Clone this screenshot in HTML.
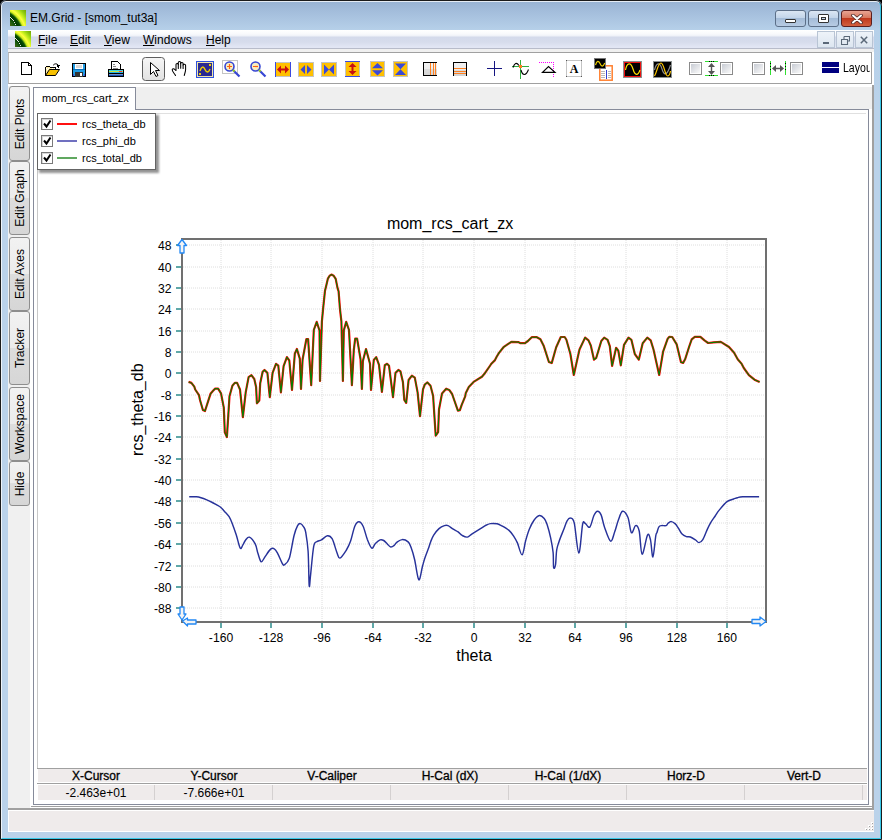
<!DOCTYPE html>
<html><head><meta charset="utf-8">
<style>
*{margin:0;padding:0;box-sizing:border-box}
html,body{width:882px;height:840px;overflow:hidden;background:#000}
body{font-family:"Liberation Sans",sans-serif;position:relative}
.a{position:absolute}
#win{left:0;top:0;width:882px;height:840px;border-radius:6px 6px 0 0;
 background:linear-gradient(180deg,#97b2d2 0px,#a4bedc 12px,#b6d0e9 30px,#bad2ea 100px,#bad2ea 100%);overflow:hidden}
#title{left:30px;top:11px;font-size:12px;color:#000;white-space:nowrap}
.cap{top:10px;height:17px;border:1px solid #5c6f88;border-radius:3px;
 background:linear-gradient(180deg,#dbe6f3 0%,#c3d5ea 45%,#a4bcd8 50%,#b7cbe3 100%)}
#menubar{left:8px;top:30px;width:866px;height:18px;background:linear-gradient(180deg,#ffffff 0px,#f8f9fc 4px,#eef1f8 6px,#d4daeb 7px,#d6dcec 12px,#e2e6f4 17px,#e2e6f4 18px)}
.mi{top:33px;font-size:12px;color:#000;white-space:nowrap}
.mi u{text-decoration:underline;text-underline-offset:1px;text-decoration-thickness:1px}
.mdib{top:31px;height:17px;width:18px;border:1px solid #b8c4d4;background:linear-gradient(180deg,#eef3f9,#dde6f0)}
#gap{left:8px;top:48px;width:866px;height:4px;background:#f0f0f0;border-top:1px solid #b8bcca}
#toolbar{left:8px;top:52px;width:864px;height:32px;border:1px solid #a0a0a0;border-left:1px solid #bcbcbc;background:#fff}
#main{left:8px;top:84px;width:866px;height:724px;background:#fff}
#tabcol{left:8px;top:86px;width:22px;height:722px;background:#f0f0f0}
.stab{left:9px;width:21px;border:1px solid #8e8e8e;border-radius:3px;background:linear-gradient(180deg,#f2f2f2 0%,#ebebeb 50%,#dddddd 50%,#d6d6d6 100%)}
.stab span{position:absolute;left:50%;top:50%;transform:translate(-50%,-50%) rotate(-90deg);font-size:12px;white-space:nowrap;color:#000}
#docouter{left:33px;top:109px;width:836px;height:696px;border:1px solid #868b9a;background:#fff}
#doctab{left:33px;top:87px;width:103px;height:23px;border:1px solid #868b9a;border-bottom:none;background:#fff}
#tabstrip{left:136px;top:87px;width:736px;height:22px;background:#efefef}
.th{top:769px;height:14px;text-align:center;font-size:12px;-webkit-text-stroke:0.3px #000;color:#000;white-space:nowrap;line-height:14px}
.td{top:786px;height:15px;text-align:center;font-size:12px;color:#000;white-space:nowrap;line-height:15px}
#status{left:8px;top:810px;width:866px;height:22px;background:#efebeb;border-top:1px solid #fff;border-left:1px solid #fff;border-bottom:1px solid #fff}
</style></head><body>
<div id="win" class="a">
 <!-- title bar icon -->
 <svg class="a" style="left:10px;top:10px" width="16" height="16" viewBox="0 0 16 16">
  <defs><radialGradient id="g1" gradientUnits="userSpaceOnUse" cx="-14" cy="26" r="40"><stop offset="0" stop-color="#3a4a18"/><stop offset=".42" stop-color="#506a12"/><stop offset=".52" stop-color="#1a5a10"/><stop offset=".6" stop-color="#003a00"/><stop offset=".66" stop-color="#0a5008"/><stop offset=".71" stop-color="#d0f020"/><stop offset=".76" stop-color="#ffff40"/><stop offset=".82" stop-color="#c8f020"/><stop offset=".9" stop-color="#90cc10"/><stop offset="1" stop-color="#70a008"/></radialGradient></defs>
  <rect width="16" height="16" fill="url(#g1)"/><path d="M0 7h1v1H0zM1 8h1v1H1zM2 9h1v1H2zM3 10h1v1H3zM4 12h1v1H4zM5 14h1v1H5z" fill="#e8e8e8"/></svg>
 <div id="title" class="a">EM.Grid - [smom_tut3a]</div>
 <div class="a cap" style="left:775px;width:31px"><div class="a" style="left:9px;top:8px;width:11px;height:4px;background:#fff;border:1px solid #333;border-radius:1px"></div></div>
 <div class="a cap" style="left:808px;width:31px"><div class="a" style="left:9px;top:3px;width:11px;height:9px;background:#fff;border:1px solid #333;border-radius:1px"><div class="a" style="left:2px;top:2px;width:5px;height:3px;border:1px solid #333;background:#c6d6ea"></div></div></div>
 <div class="a cap" style="left:841px;width:31px;border-color:#5a1f1f;background:linear-gradient(180deg,#e8a493 0%,#d7785f 45%,#c0391d 50%,#d2603f 100%)">
  <svg class="a" style="left:9px;top:3px" width="12" height="10" viewBox="0 0 12 10"><path d="M2 1.5 L10 8.5 M10 1.5 L2 8.5" stroke="#4a2a2a" stroke-width="3.6" stroke-linecap="round"/><path d="M2 1.5 L10 8.5 M10 1.5 L2 8.5" stroke="#fff" stroke-width="2" stroke-linecap="round"/></svg>
 </div>

 <div id="menubar" class="a"></div>
 <svg class="a" style="left:15px;top:31px" width="16" height="16" viewBox="0 0 16 16"><rect width="16" height="16" fill="url(#g1)"/><path d="M0 7h1v1H0zM1 8h1v1H1zM2 9h1v1H2zM3 10h1v1H3zM4 12h1v1H4zM5 14h1v1H5z" fill="#e8e8e8"/></svg>
 <div class="a mi" style="left:38px"><u>F</u>ile</div>
 <div class="a mi" style="left:70px"><u>E</u>dit</div>
 <div class="a mi" style="left:104px"><u>V</u>iew</div>
 <div class="a mi" style="left:143px"><u>W</u>indows</div>
 <div class="a mi" style="left:206px"><u>H</u>elp</div>
 <div class="a mdib" style="left:817px"><div class="a" style="left:5px;top:10px;width:6px;height:2px;background:#5a6878"></div></div>
 <div class="a mdib" style="left:836px"><svg class="a" style="left:4px;top:4px" width="9" height="9" viewBox="0 0 9 9"><path d="M3 .5h5.5v4.5h-2M.5 3.5h6v5h-6z M3 .5v3" fill="none" stroke="#5a6878" stroke-width="1.1"/></svg></div>
 <div class="a mdib" style="left:855px"><svg class="a" style="left:4px;top:4px" width="8" height="8" viewBox="0 0 8 8"><path d="M.8 .8L7.2 7.2M7.2 .8L.8 7.2" stroke="#5a6878" stroke-width="1.5"/></svg></div>

 <div id="gap" class="a"></div>
 <div class="a" style="left:8px;top:52px;width:866px;height:33px;background:#fff"></div>
 <div id="toolbar" class="a"></div>
 <!--TOOLBAR-->
<svg class="a" style="left:0;top:52px" width="882" height="32" viewBox="0 52 882 32" shape-rendering="crispEdges">
<!-- new doc -->
<path d="M21.5 62.5H28.5L31.5 65.5V74.5H21.5Z" fill="#fff" stroke="#000" stroke-width="1"/>
<path d="M28 63h1v2h2v1h-3z" fill="#000"/>
<!-- open folder -->
<path d="M45.5 75.5V67.5L46.5 66.5H49.5L50.5 67.5H55.5V69.5" fill="#fdeaa0" stroke="#000"/>
<path d="M46 68h1v1h-1zM48 68h1v1h-1zM47 69h1v1h-1zM52 68h1v1h-1zM54 68h1v1h-1z" fill="#fff"/>
<path d="M45.5 75.5L49.5 69.5H59.5L55.5 75.5Z" fill="#f6c000" stroke="#000" stroke-linejoin="round" shape-rendering="auto"/>
<path d="M53.2 65.2C54.5 63.5 56.8 63.3 58.2 65" fill="none" stroke="#000" stroke-width="1" shape-rendering="auto"/>
<path d="M57 64.5h3v1h-1v2h-1v-1h-1z" fill="#000"/>
<!-- save -->
<rect x="72.5" y="63.5" width="13" height="13" fill="#1e9be4" stroke="#000"/>
<rect x="75" y="64" width="8" height="5" fill="#fff"/>
<rect x="76" y="65" width="6" height="3" fill="#d8d8d8"/>
<rect x="73" y="69" width="12" height="1" fill="#0c6fb8"/>
<rect x="75" y="72" width="8" height="5" fill="#333"/>
<rect x="80" y="73" width="2" height="3" fill="#fff"/>
<rect x="73" y="74" width="1" height="2" fill="#4a4ad0"/>
<rect x="84" y="74" width="1" height="2" fill="#4a4ad0"/>
<!-- print -->
<path d="M111.5 61.5H117.5L120.5 64.5V69.5H111.5Z" fill="#fff" stroke="#000"/>
<path d="M113 64h2v1h-2zM113 66h3v1h-3zM113 68h5v1h-5z" fill="#888"/>
<rect x="108.5" y="69.5" width="15" height="7" rx="1" fill="#1a50b0" stroke="#000"/>
<rect x="109" y="70" width="14" height="1" fill="#3bd0e0"/>
<rect x="109" y="71" width="14" height="1" fill="#c8e040"/>
<rect x="109" y="72" width="14" height="1" fill="#20b0e8"/>
<rect x="109" y="73" width="14" height="1" fill="#000"/>
<rect x="109" y="74" width="14" height="1" fill="#6a90d0"/>
<rect x="119" y="71" width="3" height="1" fill="#ff3030"/>
<!-- pressed select button -->
<rect x="142.5" y="57.5" width="22" height="23" rx="3" fill="url(#pbg)" stroke="#5e5e5e" shape-rendering="auto"/>
<defs><linearGradient id="pbg" x1="0" y1="0" x2="0" y2="1"><stop offset="0" stop-color="#f6f6f6"/><stop offset="1" stop-color="#e2e2e2"/></linearGradient></defs>
<path d="M150.5 62.5V74.5L153.5 71.5L156 76.5L158 75.5L155.5 70.5H159.5Z" fill="#fff" stroke="#000" shape-rendering="auto"/>
<!-- hand -->
<g shape-rendering="auto" stroke="#000" stroke-width="1.05" stroke-linejoin="round" stroke-linecap="round">
<path d="M175.5 75.5C174.5 73.5 172.2 71.5 172.2 69.8C172.2 68.6 173.8 68.4 175 69.6L176 70.5V64.6C176 63.2 178.3 63.2 178.3 64.6V62.6C178.3 61.2 180.7 61.2 180.7 62.6V63.4C180.7 62.2 183.1 62.2 183.1 63.6V65C183.1 64 185.6 64 185.6 65.4V69.5C185.6 72 184.6 73.5 184.3 75.5" fill="#fff"/>
<path d="M178.3 64.6V68.5M180.7 63.4V68.3M183.1 65V68.5" fill="none"/>
</g>
<!-- blue box sine -->
<rect x="196.5" y="61.5" width="17" height="16" fill="#2a2a92" stroke="#2e52e0"/>
<rect x="197.5" y="62.5" width="15" height="14" fill="none" stroke="#f0e6a8"/>
<path d="M200 71C201.5 66 203.5 66 205 69.5C206.5 73 208.5 73 210 69" fill="none" stroke="#f0d000" stroke-width="1.4" shape-rendering="auto"/>
<rect x="209" y="64" width="2" height="2" fill="#f0d000"/>
<rect x="199" y="73" width="2" height="2" fill="#f0d000"/>
<!-- zoom in -->
<rect x="222.5" y="60.5" width="15" height="13" fill="#fff" stroke="#c4c4c4"/>
<g shape-rendering="auto">
<circle cx="229.5" cy="66.5" r="4.5" fill="#f8efc0" stroke="#3646d4" stroke-width="1.6"/>
<path d="M233 70L239.5 76.5" stroke="#3646d4" stroke-width="2.2"/>
<path d="M233 70L234.5 71.5" stroke="#9ad020" stroke-width="2"/>
<path d="M227 66.5H232M229.5 64V69" stroke="#ff6010" stroke-width="1.2"/>
<circle cx="255.5" cy="66.5" r="4.5" fill="#f8efc0" stroke="#3646d4" stroke-width="1.6"/>
<path d="M259 70L265.5 76.5" stroke="#3646d4" stroke-width="2.2"/>
<path d="M259 70L260.5 71.5" stroke="#9ad020" stroke-width="2"/>
<path d="M253 66.5H258" stroke="#ff6010" stroke-width="1.2"/>
</g>
<!-- icon1 h expand red -->
<rect x="275" y="62" width="16" height="15" fill="#ffc000"/>
<path d="M275 62h16v1h-16zM275 76h16v1h-16z" fill="#c4c4c4"/>
<path d="M275 62h1v15h-1zM290 62h1v15h-1z" fill="#3a4ae0"/>
<path d="M277 69.5L281 65.5V68.5H285V65.5L289 69.5L285 73.5V70.5H281V73.5Z" fill="#c81010" shape-rendering="auto"/>
<!-- icon2 -->
<rect x="298.5" y="62.5" width="15" height="14" fill="#ffc000" stroke="#c4c4c4"/>
<path d="M300.5 69.5L305 65V74ZM311.5 69.5L307 65V74Z" fill="#3a4ad8" shape-rendering="auto"/>
<!-- icon3 -->
<rect x="321.5" y="62.5" width="15" height="14" fill="#ffc000" stroke="#c4c4c4"/>
<path d="M324 64.5L329 69.5L324 74.5ZM334 64.5L329 69.5L334 74.5Z" fill="#3a4ad8" shape-rendering="auto"/>
<!-- icon4 v expand red -->
<rect x="345" y="61" width="15" height="16" fill="#ffc000"/>
<path d="M345 61h1v16h-1zM359 61h1v16h-1z" fill="#c4c4c4"/>
<path d="M345 61h15v1h-15zM345 76h15v1h-15z" fill="#3a4ae0"/>
<path d="M352.5 63L356.5 67H353.5V71H356.5L352.5 75L348.5 71H351.5V67H348.5Z" fill="#c81010" shape-rendering="auto"/>
<!-- icon5 -->
<rect x="370.5" y="61.5" width="14" height="15" fill="#ffc000" stroke="#c4c4c4"/>
<path d="M377.5 63L383 68.3H372ZM377.5 75.5L383 70.2H372Z" fill="#3a4ad8" shape-rendering="auto"/>
<!-- icon6 -->
<rect x="393.5" y="61.5" width="14" height="15" fill="#ffc000" stroke="#c4c4c4"/>
<path d="M395 63.5H406L400.5 69.3ZM395 75H406L400.5 69.3Z" fill="#3a4ad8" shape-rendering="auto"/>
<!-- vgrid -->
<defs><linearGradient id="gg" x1="0" y1="0" x2="0" y2="1"><stop offset="0" stop-color="#f2f2f2"/><stop offset=".5" stop-color="#ececec"/><stop offset=".5" stop-color="#dcdcdc"/><stop offset="1" stop-color="#d4d4d4"/></linearGradient></defs>
<rect x="424" y="63" width="13" height="12" fill="url(#gg)"/>
<path d="M423 62h14v1h-14zM423 75h14v1h-14zM423 62h1v14h-1z" fill="#000"/>
<path d="M430 63h1v12h-1zM433 63h1v12h-1zM435 63h1v12h-1z" fill="#ff8020"/>
<!-- hgrid -->
<rect x="454" y="63" width="12" height="13" fill="url(#gg)"/>
<path d="M453 62h14v1h-14zM453 62h1v14h-1zM466 62h1v14h-1z" fill="#000"/>
<path d="M454 68h12v1h-12zM454 71h12v1h-12zM454 73h12v1h-12z" fill="#ff8020"/>
<!-- crosshair -->
<path d="M494 61h1.2v15h-1.2zM487 67.8h15v1.2h-15z" fill="#141480"/>
<!-- tracker -->
<path d="M520 60h1v19h-1zM512 66h17v1h-17z" fill="#30b040"/>
<path d="M513 67.5C514.5 63 516.5 62 519 65.5M521 70C522.5 76 526 76 528.5 69.5" fill="none" stroke="#000" stroke-width="1.1" shape-rendering="auto"/>
<rect x="519" y="65" width="3" height="3" fill="#ff8020"/>
<!-- triangle w/ magenta -->
<path d="M539 62h1v1h-1zM541 62h1v1h-1zM543 62h1v1h-1zM545 62h1v1h-1zM547 62h1v1h-1zM549 62h1v1h-1zM551 62h1v1h-1zM553 62h1v1h-1zM553 64h1v1h-1zM553 66h1v1h-1zM553 68h1v1h-1zM553 70h1v1h-1zM553 72h1v1h-1zM553 74h1v1h-1zM553 76h1v1h-1z" fill="#ff00ff"/>
<path d="M542.5 72.3H555L548.5 66.5Z" fill="none" stroke="#000" stroke-width="1.2" shape-rendering="auto"/>
<!-- text A -->
<rect x="566.5" y="60.5" width="15" height="16" fill="#fff" stroke="#c4c4c4"/><path d="M566 60h1v1h-1zM581 60h1v1h-1zM566 76h1v1h-1zM581 76h1v1h-1z" fill="#555"/>
<text x="574" y="73" text-anchor="middle" font-family="Liberation Serif" font-weight="bold" font-size="12" fill="#000" shape-rendering="auto">A</text>
<!-- graph+doc -->
<rect x="599" y="65" width="14" height="16" fill="#fff"/>
<rect x="599.8" y="65.8" width="12.4" height="14.4" fill="none" stroke="#ff8030" stroke-width="1.5" shape-rendering="auto"/>
<path d="M601 71h4v1h-4zM601 73h4v1h-4zM601 75h4v1h-4zM601 77h4v1h-4zM608 71h3v1h-3zM608 73h3v1h-3zM608 75h3v1h-3zM608 77h3v1h-3z" fill="#b8b8b8"/>
<rect x="606" y="70" width="1" height="9" fill="#3040d0"/>
<rect x="594.5" y="58.5" width="11" height="10" fill="#000" stroke="#777"/>
<path d="M595.5 65C596.8 60.5 598.5 60.5 600 63.5C601.5 67 603 67 604.8 63" fill="none" stroke="#f0d000" stroke-width="1.2" shape-rendering="auto"/>
<!-- red box -->
<rect x="623.5" y="61.5" width="18" height="16" fill="#000" stroke="#8a9090"/>
<rect x="624.5" y="62.5" width="16" height="14" fill="none" stroke="#ee1010"/>
<path d="M625.5 70C627 62 631 62 633 69C635 76 638 76 640 70" fill="none" stroke="#ffe000" stroke-width="1.2" shape-rendering="auto"/>
<!-- gray/yellow box -->
<rect x="653.5" y="61.5" width="18" height="16" fill="#000" stroke="#8a9090"/>
<path d="M654.5 70C656.5 62 660 62 662 69C664 76 667 76 670.5 65" fill="none" stroke="#909090" stroke-width="1.1" shape-rendering="auto"/>
<path d="M654.5 76C657 72 658 63 661 63C664 63 665 76 667.5 76C669 76 670 74 670.5 71" fill="none" stroke="#ffc800" stroke-width="1.2" shape-rendering="auto"/>
<!-- checkboxes -->
<defs><linearGradient id="cb" x1="0" y1="0" x2="1" y2="1"><stop offset="0" stop-color="#c8ccd4"/><stop offset="1" stop-color="#fafafa"/></linearGradient></defs>
<g>
<rect x="689.5" y="62.5" width="12" height="12" fill="#fff" stroke="#8a8a8a"/><rect x="691" y="64" width="9" height="9" fill="url(#cb)"/>
<rect x="720.5" y="62.5" width="12" height="12" fill="#fff" stroke="#8a8a8a"/><rect x="722" y="64" width="9" height="9" fill="url(#cb)"/>
<rect x="752.5" y="62.5" width="12" height="12" fill="#fff" stroke="#8a8a8a"/><rect x="754" y="64" width="9" height="9" fill="url(#cb)"/>
<rect x="790.5" y="62.5" width="12" height="12" fill="#fff" stroke="#8a8a8a"/><rect x="792" y="64" width="9" height="9" fill="url(#cb)"/>
</g>
<!-- v arrows -->
<path d="M705 61h13v1h-13zM705 75h13v1h-13z" fill="#30e030"/>
<path d="M711 61h1v1h-1zM709 61h1v1h-1zM713 61h1v1h-1zM711 75h1v1h-1zM709 75h1v1h-1zM713 75h1v1h-1z" fill="#000"/>
<path d="M711.5 63L715 67H712.2V71H715L711.5 75L708 71H710.8V67H708Z" fill="#555" shape-rendering="auto"/>
<!-- h arrows -->
<path d="M770 61h1v14h-1zM785 61h1v14h-1z" fill="#30e030"/>
<path d="M770 63h1v1h-1zM770 66h1v1h-1zM770 69h1v1h-1zM785 63h1v1h-1zM785 66h1v1h-1zM785 69h1v1h-1z" fill="#000"/>
<path d="M772 68.5L776 65V67.8H780V65L784 68.5L780 72V69.2H776V72Z" fill="#555" shape-rendering="auto"/>
<!-- layout -->
<rect x="822" y="62" width="17" height="5" fill="#000080"/>
<rect x="822" y="68" width="17" height="5" fill="#000080"/>
</svg>

<!--/TOOLBAR-->
 <div class="a" style="left:843px;top:61px;width:27px;height:16px;overflow:hidden;font-size:12px;white-space:nowrap;color:#000"><span style="display:inline-block;transform:scale(.88,1.05);transform-origin:0 50%">Layout</span></div>

 <div id="main" class="a"></div>
 <div id="tabcol" class="a"></div>
 <div class="a" style="left:872px;top:85px;width:2px;height:725px;background:#a0a0a0"></div>
 <div class="a" style="left:31px;top:806px;width:843px;height:1px;background:#a0a0a0"></div>
 <div class="a" style="left:8px;top:808px;width:866px;height:2px;background:#a0a0a0"></div>
 <div class="a stab" style="top:86px;height:75px"><span>Edit Plots</span></div>
 <div class="a stab" style="top:161px;height:74px"><span>Edit Graph</span></div>
 <div class="a stab" style="top:237px;height:74px"><span>Edit Axes</span></div>
 <div class="a stab" style="top:311px;height:74px"><span>Tracker</span></div>
 <div class="a stab" style="top:387px;height:74px"><span>Workspace</span></div>
 <div class="a stab" style="top:461px;height:45px"><span>Hide</span></div>

 <div id="tabstrip" class="a"></div>
 <div id="docouter" class="a"></div>
 <div id="doctab" class="a"><div class="a" style="left:8px;top:4px;font-size:11px;color:#000;white-space:nowrap">mom_rcs_cart_zx</div></div>


 <!-- inner plot border -->
 <div class="a" style="left:37px;top:113px;width:829px;height:655px;border-left:1px solid #c8c8c8;border-top:1px solid #e0e0e0"></div>
 <!-- legend -->
 <div class="a" style="left:39px;top:115px;width:120px;height:58px;background:#707070;opacity:.75;filter:blur(1px)"></div>
 <div class="a" style="left:37px;top:113px;width:119px;height:57px;background:#fff;border:1px solid #646464"></div>
 <svg class="a" style="left:37px;top:113px" width="119" height="57" viewBox="37 113 119 57">
  <g shape-rendering="crispEdges">
  <rect x="41.5" y="118.5" width="11" height="11" fill="#fff" stroke="#7a7a7a"/>
  <rect x="41.5" y="135.5" width="11" height="11" fill="#fff" stroke="#7a7a7a"/>
  <rect x="41.5" y="152.5" width="11" height="11" fill="#fff" stroke="#7a7a7a"/>
  <rect x="42" y="119" width="1" height="10" fill="#d8d8d8"/><rect x="42" y="119" width="10" height="1" fill="#d8d8d8"/>
  <rect x="42" y="136" width="1" height="10" fill="#d8d8d8"/><rect x="42" y="136" width="10" height="1" fill="#d8d8d8"/>
  <rect x="42" y="153" width="1" height="10" fill="#d8d8d8"/><rect x="42" y="153" width="10" height="1" fill="#d8d8d8"/>
  <rect x="57" y="123" width="20" height="2" fill="#ff1010"/>
  <rect x="57" y="140" width="20" height="2" fill="#7070c0"/>
  <rect x="57" y="157" width="20" height="2" fill="#60a860"/>
  </g>
  <path d="M44 123.5L46.5 126.5L50.5 120.5M44 140.5L46.5 143.5L50.5 137.5M44 157.5L46.5 160.5L50.5 154.5" fill="none" stroke="#000" stroke-width="2"/>
  <g font-family="Liberation Sans" font-size="11" fill="#000">
  <text x="82" y="128">rcs_theta_db</text>
  <text x="82" y="145">rcs_phi_db</text>
  <text x="82" y="162">rcs_total_db</text>
  </g>
 </svg>
 <div class="a" style="left:37px;top:768px;width:830px;height:1px;background:#a0a0a0"></div>
 <div class="a" style="left:38px;top:769px;width:829px;height:13px;background:#efebeb"></div>
 <div class="a" style="left:37px;top:783px;width:830px;height:1px;background:#a0a0a0"></div>
 <div class="a" style="left:38px;top:785px;width:829px;height:15px;background:#efebeb"></div>
 <div class="a th" style="left:37px;width:118px">X-Cursor</div>
 <div class="a td" style="left:37px;width:118px">-2.463e+01</div>
 <div class="a th" style="left:155px;width:118px">Y-Cursor</div>
 <div class="a td" style="left:155px;width:118px">-7.666e+01</div>
 <div class="a" style="left:154px;top:785px;width:1px;height:15px;background:#d4d0d0"></div>
 <div class="a th" style="left:273px;width:118px">V-Caliper</div>
 <div class="a" style="left:272px;top:785px;width:1px;height:15px;background:#d4d0d0"></div>
 <div class="a th" style="left:391px;width:118px">H-Cal (dX)</div>
 <div class="a" style="left:390px;top:785px;width:1px;height:15px;background:#d4d0d0"></div>
 <div class="a th" style="left:509px;width:118px">H-Cal (1/dX)</div>
 <div class="a" style="left:508px;top:785px;width:1px;height:15px;background:#d4d0d0"></div>
 <div class="a th" style="left:627px;width:118px">Horz-D</div>
 <div class="a" style="left:626px;top:785px;width:1px;height:15px;background:#d4d0d0"></div>
 <div class="a th" style="left:745px;width:118px">Vert-D</div>
 <div class="a" style="left:744px;top:785px;width:1px;height:15px;background:#d4d0d0"></div>
 <div class="a" style="left:862px;top:785px;width:1px;height:15px;background:#d4d0d0"></div>
 <!--PLOT-->
<svg class="a" style="left:0;top:0" width="882" height="840" viewBox="0 0 882 840">
<path d="M221 240V621 M271 240V621 M322 240V621 M373 240V621 M423 240V621 M474 240V621 M525 240V621 M575 240V621 M626 240V621 M677 240V621 M727 240V621 M183 245H765 M183 267H765 M183 288H765 M183 309H765 M183 331H765 M183 352H765 M183 373H765 M183 395H765 M183 416H765 M183 437H765 M183 459H765 M183 480H765 M183 501H765 M183 523H765 M183 544H765 M183 566H765 M183 587H765 M183 608H765" stroke="#dedede" stroke-width="1" stroke-dasharray="1 1" fill="none"/>
<path d="M189.2 496.8 C190.4 496.8 194.4 496.7 196.4 496.8 C198.4 496.9 199.4 497.2 201.0 497.7 C202.6 498.2 204.5 498.9 206.2 499.6 C207.9 500.3 209.7 501.1 211.4 502.0 C213.2 502.9 215.1 504.0 216.7 504.9 C218.3 505.8 219.6 506.4 220.9 507.5 C222.2 508.6 223.1 509.9 224.5 511.4 C225.9 512.9 227.8 514.6 229.1 516.7 C230.4 518.8 231.2 520.9 232.4 523.9 C233.6 526.9 235.0 531.0 236.3 535.0 C237.6 539.0 239.1 546.5 240.2 548.1 C241.3 549.7 242.0 546.1 242.9 544.8 C243.8 543.5 244.4 541.5 245.5 540.2 C246.6 538.9 247.8 536.5 249.4 537.2 C251.0 537.9 253.9 541.5 255.3 544.2 C256.7 546.9 256.9 550.4 257.9 553.3 C258.9 556.2 260.0 561.2 261.2 561.8 C262.4 562.3 263.6 558.7 265.1 556.6 C266.6 554.5 268.9 550.7 270.4 549.4 C271.9 548.1 273.1 548.1 274.3 548.8 C275.5 549.4 276.3 550.9 277.6 553.3 C278.9 555.7 281.0 561.2 282.1 563.1 C283.2 565.0 283.1 565.7 284.3 564.9 C285.5 564.1 287.7 563.2 289.3 558.3 C290.9 553.4 292.6 541.2 294.0 535.7 C295.4 530.2 296.5 527.6 297.6 525.6 C298.7 523.6 299.4 523.4 300.4 523.6 C301.4 523.8 302.7 525.4 303.6 526.8 C304.5 528.2 304.9 528.0 305.7 532.1 C306.4 536.2 307.5 542.3 308.1 551.2 C308.7 560.1 308.8 581.9 309.2 585.7 C309.6 589.5 309.9 580.3 310.7 573.8 C311.4 567.2 312.7 551.8 313.7 546.4 C314.7 541.0 315.4 542.8 316.7 541.7 C318.0 540.6 319.6 540.9 321.4 539.9 C323.2 538.9 325.6 535.9 327.4 535.7 C329.2 535.5 330.5 535.9 332.1 538.7 C333.7 541.5 335.6 549.2 336.9 552.4 C338.2 555.6 338.3 558.5 339.9 558.1 C341.5 557.7 344.6 552.8 346.4 550.0 C348.2 547.2 349.2 545.1 350.6 541.1 C352.0 537.1 353.4 529.4 354.8 526.2 C356.2 523.0 357.5 521.8 358.9 521.8 C360.3 521.8 361.7 523.3 363.1 526.2 C364.5 529.1 365.9 535.6 367.3 539.3 C368.8 543.0 370.5 547.5 371.8 548.2 C373.1 548.9 374.0 544.9 375.4 543.5 C376.8 542.1 378.7 540.4 380.1 539.9 C381.5 539.4 382.5 539.8 383.7 540.5 C384.9 541.2 386.1 542.9 387.3 544.0 C388.5 545.1 389.6 546.8 390.8 547.0 C392.0 547.2 393.4 546.0 394.4 545.2 C395.4 544.4 395.5 543.2 396.8 542.3 C398.1 541.4 400.2 539.7 402.1 539.6 C404.0 539.5 406.6 540.6 408.1 541.9 C409.6 543.2 410.0 544.7 411.1 547.6 C412.2 550.5 413.3 554.1 414.6 559.5 C415.9 564.9 417.5 578.6 418.8 579.8 C420.1 581.0 421.4 570.3 422.4 566.7 C423.4 563.1 423.8 561.3 424.8 558.3 C425.8 555.3 427.3 551.6 428.3 548.8 C429.3 546.0 429.8 544.0 430.7 541.7 C431.6 539.4 432.3 537.3 433.7 535.1 C435.1 532.9 437.2 530.2 439.0 528.6 C440.8 527.0 442.9 526.1 444.4 525.6 C445.9 525.1 446.5 525.0 448.0 525.6 C449.5 526.2 451.6 528.2 453.3 529.2 C455.0 530.2 456.6 530.9 458.1 531.9 C459.6 532.9 460.8 534.6 462.3 535.5 C463.9 536.4 465.8 537.4 467.4 537.1 C469.0 536.8 469.9 535.3 472.1 533.9 C474.3 532.5 478.1 530.1 480.5 528.6 C482.9 527.1 484.7 525.8 486.4 525.0 C488.1 524.2 488.8 523.8 490.6 523.6 C492.4 523.4 495.3 523.5 497.1 523.8 C498.9 524.1 499.3 524.5 501.3 525.6 C503.3 526.7 506.9 528.6 509.0 530.4 C511.1 532.2 512.4 534.2 513.8 536.3 C515.2 538.4 516.0 539.8 517.4 542.9 C518.8 546.0 520.7 555.2 522.1 554.8 C523.5 554.4 524.5 544.8 525.7 540.5 C526.9 536.2 527.9 532.6 529.3 529.2 C530.7 525.8 532.3 522.5 534.0 520.2 C535.7 517.9 537.7 515.8 539.4 515.5 C541.1 515.2 542.9 517.0 544.2 518.5 C545.5 520.0 546.0 521.1 547.1 524.4 C548.2 527.7 549.7 533.4 550.7 538.1 C551.7 542.8 552.6 547.5 553.1 552.4 C553.6 557.3 553.2 565.2 553.6 567.3 C554.0 569.4 555.0 567.8 555.5 564.9 C556.0 562.0 556.1 553.9 556.7 550.0 C557.3 546.1 557.9 545.1 559.0 541.7 C560.1 538.3 562.2 533.3 563.6 529.8 C565.0 526.3 565.9 522.8 567.1 520.8 C568.3 518.8 569.5 517.7 570.7 518.1 C571.9 518.5 572.9 517.4 574.3 523.2 C575.6 529.0 577.4 552.8 578.8 553.0 C580.2 553.2 581.6 529.4 582.6 524.4 C583.6 519.4 583.8 522.8 585.0 523.2 C586.2 523.7 588.3 528.4 589.8 527.1 C591.3 525.8 592.6 518.1 593.9 515.5 C595.2 512.9 596.3 511.4 597.5 511.3 C598.7 511.2 599.9 512.2 601.1 514.9 C602.3 517.6 603.0 523.0 604.6 527.4 C606.2 531.8 608.9 540.4 610.6 541.1 C612.3 541.8 613.5 535.0 614.8 531.5 C616.1 528.0 617.0 523.6 618.3 520.2 C619.6 516.8 620.9 511.8 622.5 511.3 C624.1 510.8 626.4 513.7 627.9 517.3 C629.4 520.9 630.1 531.3 631.4 532.7 C632.7 534.1 634.3 525.9 635.6 525.6 C636.9 525.3 638.1 526.2 639.2 531.0 C640.3 535.8 640.7 553.5 642.1 554.2 C643.5 554.9 646.1 537.5 647.5 535.1 C648.9 532.7 649.6 536.3 650.5 539.9 C651.4 543.5 652.0 557.6 652.9 556.9 C653.8 556.2 655.1 539.8 655.8 535.7 C656.5 531.6 656.5 533.9 657.0 532.4 C657.5 530.9 658.1 528.0 658.9 526.9 C659.6 525.8 660.3 525.8 661.5 525.6 C662.7 525.4 665.0 526.0 666.1 525.6 C667.2 525.2 667.2 523.9 668.1 523.2 C669.0 522.5 670.2 521.5 671.4 521.6 C672.6 521.7 674.1 522.8 675.3 523.9 C676.5 525.0 677.5 526.9 678.6 528.5 C679.7 530.1 680.5 532.4 681.8 533.7 C683.1 535.1 685.0 536.1 686.4 536.6 C687.8 537.1 688.9 536.4 690.4 537.0 C691.9 537.6 694.2 539.1 695.6 540.0 C697.0 540.9 697.7 542.7 698.9 542.6 C700.1 542.5 701.4 541.9 702.8 539.6 C704.2 537.4 706.1 531.9 707.4 529.1 C708.7 526.3 709.4 524.8 710.7 522.6 C712.0 520.4 713.8 518.1 715.2 516.0 C716.6 513.9 717.2 512.5 719.2 510.1 C721.2 507.7 724.6 503.5 727.0 501.6 C729.4 499.8 731.9 499.6 733.6 499.0 C735.4 498.4 736.0 498.1 737.5 497.7 C739.0 497.3 739.1 496.9 742.7 496.8 C746.3 496.7 756.4 496.8 759.1 496.8" stroke="#27329a" stroke-width="1.45" fill="none" stroke-linejoin="round"/>
<path d="M188.6 381.9 L191.4 382.9 L194.3 386.7 L195.2 389.5 L199.0 395.2 L200.0 400.0 L202.9 410.0 L205.0 411.0 L207.6 402.9 L210.5 393.8 L213.3 390.5 L215.2 388.6 L218.1 388.6 L221.0 393.3 L223.8 407.6 L224.8 432.4 L226.9 437.1 L229.5 396.2 L232.4 385.7 L234.8 382.9 L237.1 382.9 L240.0 389.5 L242.9 417.1 L245.7 392.4 L248.6 377.1 L251.4 375.2 L254.3 379.0 L256.1 387.1 L256.9 403.3 L259.3 400.5 L260.2 383.3 L262.6 371.9 L264.5 370.0 L267.4 372.9 L269.8 397.1 L272.6 372.9 L276.0 363.8 L278.3 365.7 L280.9 392.4 L283.6 366.2 L286.9 357.1 L289.3 360.5 L292.0 390.0 L294.8 353.8 L296.9 349.0 L299.8 358.6 L301.0 389.0 L302.6 359.5 L306.4 339.0 L308.1 339.0 L311.2 385.2 L313.8 330.0 L316.7 321.9 L319.5 330.5 L320.0 381.0 L321.9 321.4 L323.2 307.9 L325.0 290.7 L326.4 285.0 L327.9 278.6 L329.6 275.7 L331.8 274.6 L333.6 275.7 L335.7 278.9 L337.5 287.9 L338.6 291.4 L340.0 309.3 L341.4 321.4 L342.9 381.0 L343.8 330.5 L346.2 321.9 L349.0 330.0 L351.9 385.2 L353.8 350.0 L355.2 338.6 L357.1 338.6 L360.5 359.0 L361.9 389.0 L362.9 361.0 L366.0 349.0 L370.0 363.8 L371.0 390.0 L373.8 360.0 L376.2 357.1 L379.0 364.8 L381.9 391.9 L384.8 365.2 L387.1 363.8 L389.0 365.7 L393.0 397.1 L395.5 372.9 L398.4 370.0 L400.5 371.4 L402.9 381.9 L404.3 400.0 L406.2 402.9 L408.6 380.0 L411.9 375.7 L414.8 377.6 L417.6 392.4 L420.0 416.2 L423.0 389.3 L424.8 384.5 L427.4 382.4 L430.5 385.7 L433.1 395.8 L435.7 435.7 L438.1 432.1 L439.0 409.5 L442.0 393.5 L446.2 388.7 L449.2 389.9 L452.1 394.0 L457.9 410.7 L459.9 410.1 L461.7 404.8 L465.2 396.4 L465.8 392.9 L468.8 386.9 L473.6 381.9 L481.9 376.8 L484.9 373.2 L490.2 365.5 L491.4 363.7 L495.0 360.1 L496.8 356.5 L499.0 352.9 L503.5 347.2 L507.5 344.4 L511.4 341.8 L518.2 342.1 L520.5 343.2 L525.0 343.2 L527.9 341.0 L531.8 337.2 L536.4 337.0 L540.4 339.3 L543.8 346.1 L548.9 362.0 L551.7 363.1 L556.2 347.2 L560.8 337.0 L564.7 337.0 L566.4 339.8 L570.4 354.0 L573.8 375.0 L579.5 349.5 L585.1 337.6 L588.5 340.4 L590.8 345.5 L594.0 359.7 L596.2 358.0 L601.3 341.0 L604.2 337.6 L607.6 339.8 L609.8 346.1 L612.1 365.9 L616.1 347.8 L618.3 350.6 L620.8 365.4 L624.0 344.9 L628.5 337.6 L631.4 339.8 L634.8 354.0 L638.8 359.7 L642.7 343.2 L647.3 337.6 L650.7 340.4 L653.5 349.5 L659.2 375.0 L663.1 351.7 L667.7 338.7 L669.4 336.8 L672.2 337.0 L676.7 344.4 L681.0 362.3 L683.1 362.9 L685.1 359.3 L689.2 346.5 L691.7 339.4 L694.8 336.8 L700.4 336.8 L704.5 340.4 L708.1 343.0 L713.7 342.4 L720.8 341.9 L729.0 347.0 L734.1 352.7 L737.7 359.3 L741.7 363.9 L743.8 368.0 L748.9 375.1 L754.5 379.7 L759.6 382.0" stroke="#ff0000" stroke-width="2.2" fill="none" stroke-linejoin="round"/>
<path d="M188.6 381.9 L191.4 382.9 L194.3 386.7 L195.2 389.5 L199.0 395.2 L200.0 400.0 L202.9 410.0 L205.0 411.0 L207.6 402.9 L210.5 393.8 L213.3 390.5 L215.2 388.6 L218.1 388.6 L221.0 393.3 L223.8 407.6 L224.8 432.4 L226.9 437.1 L229.5 396.2 L232.4 385.7 L234.8 382.9 L237.1 382.9 L240.0 389.5 L242.9 417.1 L245.7 392.4 L248.6 377.1 L251.4 375.2 L254.3 379.0 L256.1 387.1 L256.9 403.3 L259.3 400.5 L260.2 383.3 L262.6 371.9 L264.5 370.0 L267.4 372.9 L269.8 397.1 L272.6 372.9 L276.0 363.8 L278.3 365.7 L280.9 392.4 L283.6 366.2 L286.9 357.1 L289.3 360.5 L292.0 390.0 L294.8 353.8 L296.9 349.0 L299.8 358.6 L301.0 389.0 L302.6 359.5 L306.4 339.0 L308.1 339.0 L311.2 385.2 L313.8 330.0 L316.7 321.9 L319.5 330.5 L320.0 381.0 L321.9 321.4 L323.2 307.9 L325.0 290.7 L326.4 285.0 L327.9 278.6 L329.6 275.7 L331.8 274.6 L333.6 275.7 L335.7 278.9 L337.5 287.9 L338.6 291.4 L340.0 309.3 L341.4 321.4 L342.9 381.0 L343.8 330.5 L346.2 321.9 L349.0 330.0 L351.9 385.2 L353.8 350.0 L355.2 338.6 L357.1 338.6 L360.5 359.0 L361.9 389.0 L362.9 361.0 L366.0 349.0 L370.0 363.8 L371.0 390.0 L373.8 360.0 L376.2 357.1 L379.0 364.8 L381.9 391.9 L384.8 365.2 L387.1 363.8 L389.0 365.7 L393.0 397.1 L395.5 372.9 L398.4 370.0 L400.5 371.4 L402.9 381.9 L404.3 400.0 L406.2 402.9 L408.6 380.0 L411.9 375.7 L414.8 377.6 L417.6 392.4 L420.0 416.2 L423.0 389.3 L424.8 384.5 L427.4 382.4 L430.5 385.7 L433.1 395.8 L435.7 435.7 L438.1 432.1 L439.0 409.5 L442.0 393.5 L446.2 388.7 L449.2 389.9 L452.1 394.0 L457.9 410.7 L459.9 410.1 L461.7 404.8 L465.2 396.4 L465.8 392.9 L468.8 386.9 L473.6 381.9 L481.9 376.8 L484.9 373.2 L490.2 365.5 L491.4 363.7 L495.0 360.1 L496.8 356.5 L499.0 352.9 L503.5 347.2 L507.5 344.4 L511.4 341.8 L518.2 342.1 L520.5 343.2 L525.0 343.2 L527.9 341.0 L531.8 337.2 L536.4 337.0 L540.4 339.3 L543.8 346.1 L548.9 362.0 L551.7 363.1 L556.2 347.2 L560.8 337.0 L564.7 337.0 L566.4 339.8 L570.4 354.0 L573.8 375.0 L579.5 349.5 L585.1 337.6 L588.5 340.4 L590.8 345.5 L594.0 359.7 L596.2 358.0 L601.3 341.0 L604.2 337.6 L607.6 339.8 L609.8 346.1 L612.1 365.9 L616.1 347.8 L618.3 350.6 L620.8 365.4 L624.0 344.9 L628.5 337.6 L631.4 339.8 L634.8 354.0 L638.8 359.7 L642.7 343.2 L647.3 337.6 L650.7 340.4 L653.5 349.5 L659.2 375.0 L663.1 351.7 L667.7 338.7 L669.4 336.8 L672.2 337.0 L676.7 344.4 L681.0 362.3 L683.1 362.9 L685.1 359.3 L689.2 346.5 L691.7 339.4 L694.8 336.8 L700.4 336.8 L704.5 340.4 L708.1 343.0 L713.7 342.4 L720.8 341.9 L729.0 347.0 L734.1 352.7 L737.7 359.3 L741.7 363.9 L743.8 368.0 L748.9 375.1 L754.5 379.7 L759.6 382.0" stroke="#008000" stroke-width="1.1" stroke-opacity="1" fill="none" stroke-linejoin="round"/>
<path d="M182 239V622H766V239Z" stroke="#707070" stroke-width="2" fill="none"/>
<path d="M221 623V628 M271 623V628 M322 623V628 M373 623V628 M423 623V628 M474 623V628 M525 623V628 M575 623V628 M626 623V628 M677 623V628 M727 623V628 M176 245H181 M176 267H181 M176 288H181 M176 309H181 M176 331H181 M176 352H181 M176 373H181 M176 395H181 M176 416H181 M176 437H181 M176 459H181 M176 480H181 M176 501H181 M176 523H181 M176 544H181 M176 566H181 M176 587H181 M176 608H181" stroke="#5fa8a8" stroke-width="2" fill="none"/>
<g font-family="Liberation Sans" font-size="13.5" fill="#000"><text transform="translate(171.5 250) scale(0.9 1)" text-anchor="end">48</text><text transform="translate(171.5 272) scale(0.9 1)" text-anchor="end">40</text><text transform="translate(171.5 293) scale(0.9 1)" text-anchor="end">32</text><text transform="translate(171.5 314) scale(0.9 1)" text-anchor="end">24</text><text transform="translate(171.5 336) scale(0.9 1)" text-anchor="end">16</text><text transform="translate(171.5 357) scale(0.9 1)" text-anchor="end">8</text><text transform="translate(171.5 378) scale(0.9 1)" text-anchor="end">0</text><text transform="translate(171.5 400) scale(0.9 1)" text-anchor="end">-8</text><text transform="translate(171.5 421) scale(0.9 1)" text-anchor="end">-16</text><text transform="translate(171.5 442) scale(0.9 1)" text-anchor="end">-24</text><text transform="translate(171.5 464) scale(0.9 1)" text-anchor="end">-32</text><text transform="translate(171.5 485) scale(0.9 1)" text-anchor="end">-40</text><text transform="translate(171.5 506) scale(0.9 1)" text-anchor="end">-48</text><text transform="translate(171.5 528) scale(0.9 1)" text-anchor="end">-56</text><text transform="translate(171.5 549) scale(0.9 1)" text-anchor="end">-64</text><text transform="translate(171.5 571) scale(0.9 1)" text-anchor="end">-72</text><text transform="translate(171.5 592) scale(0.9 1)" text-anchor="end">-80</text><text transform="translate(171.5 613) scale(0.9 1)" text-anchor="end">-88</text><text transform="translate(221 642) scale(0.9 1)" text-anchor="middle">-160</text><text transform="translate(271 642) scale(0.9 1)" text-anchor="middle">-128</text><text transform="translate(322 642) scale(0.9 1)" text-anchor="middle">-96</text><text transform="translate(373 642) scale(0.9 1)" text-anchor="middle">-64</text><text transform="translate(423 642) scale(0.9 1)" text-anchor="middle">-32</text><text transform="translate(474 642) scale(0.9 1)" text-anchor="middle">0</text><text transform="translate(525 642) scale(0.9 1)" text-anchor="middle">32</text><text transform="translate(575 642) scale(0.9 1)" text-anchor="middle">64</text><text transform="translate(626 642) scale(0.9 1)" text-anchor="middle">96</text><text transform="translate(677 642) scale(0.9 1)" text-anchor="middle">128</text><text transform="translate(727 642) scale(0.9 1)" text-anchor="middle">160</text></g>
<text x="450" y="229" text-anchor="middle" font-family="Liberation Sans" font-size="16" fill="#000">mom_rcs_cart_zx</text>
<text x="474" y="661" text-anchor="middle" font-family="Liberation Sans" font-size="16" fill="#000">theta</text>
<text transform="translate(143.3 409.7) rotate(-90)" x="0" y="0" text-anchor="middle" font-family="Liberation Sans" font-size="16" fill="#000">rcs_theta_db</text>
<g fill="#f4f4f4" stroke="#2288f4" stroke-width="1.3" stroke-linejoin="round"><path d="M182 239.5 L186.5 245.5 L184 245.5 L184 253 L180 253 L180 245.5 L177.5 245.5 Z"/><path d="M180 607 L184 607 L184 614 L186 614 L182 620 L178 614 L180 614Z"/><path d="M182.5 621 L187.5 618 L187.5 620 L196 620 L196 624 L187.5 624 L187.5 626Z"/><path d="M766 621.5 L760 617 L760 619.5 L752 619.5 L752 623.5 L760 623.5 L760 626Z"/></g>
</svg>
<!--/PLOT-->
 <div id="status" class="a"></div>
 <svg class="a" style="left:864px;top:819px" width="12" height="12" viewBox="0 0 12 12" shape-rendering="crispEdges">
<g fill="#fff"><rect x="7" y="3" width="2" height="2"/><rect x="4" y="6" width="2" height="2"/><rect x="7" y="6" width="2" height="2"/><rect x="1" y="9" width="2" height="2"/><rect x="4" y="9" width="2" height="2"/><rect x="7" y="9" width="2" height="2"/></g>
<g fill="#a0a0a0"><rect x="8" y="4" width="1" height="1"/><rect x="5" y="7" width="1" height="1"/><rect x="8" y="7" width="1" height="1"/><rect x="2" y="10" width="1" height="1"/><rect x="5" y="10" width="1" height="1"/><rect x="8" y="10" width="1" height="1"/></g>
</svg>
 <div class="a" style="left:1px;top:1px;width:880px;height:838px;border:1px solid rgba(255,255,255,.75);border-bottom:1px solid #38c8e8;border-right:1px solid #38c8e8;border-radius:5px 5px 0 0"></div>
 <div class="a" style="left:0;top:0;width:882px;height:840px;border:1px solid #1b1b1b;border-radius:6px 6px 0 0"></div>
</div>
</body></html>
